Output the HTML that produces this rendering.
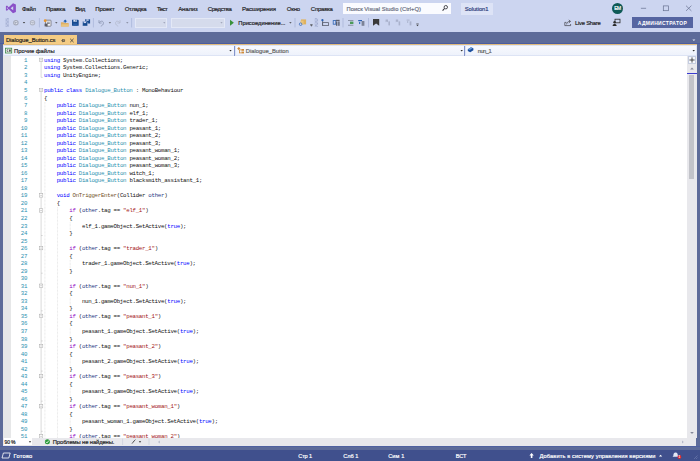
<!DOCTYPE html><html lang="ru"><head><meta charset="utf-8"><title>Dialogue_Button.cs - Solution1 - Microsoft Visual Studio</title><style>

html,body{margin:0;padding:0}
body{width:700px;height:461px;overflow:hidden;background:#ccd5f0;position:relative;font-family:"Liberation Sans", sans-serif}
.a{position:absolute}
.t{position:absolute;white-space:pre;line-height:1;-webkit-text-stroke:0.18px}
svg{position:absolute;overflow:visible}
.code{position:absolute;left:44.00px;top:56.85px;font-family:"Liberation Mono", monospace;font-size:5.750px;line-height:7.5300px;white-space:pre;color:#111;margin:0;letter-spacing:-0.2900px}
.ln{position:absolute;left:10px;width:17.2px;top:56.85px;font-family:"Liberation Mono", monospace;font-size:5.750px;line-height:7.5300px;white-space:pre;color:#2b91af;text-align:right;margin:0;letter-spacing:-0.2900px}
.k{color:#0000ff}.c{color:#8f08c4}.y{color:#2b91af}.s{color:#a31515}.m{color:#74531f}.p{color:#1f377f}

</style></head><body>
<div class="a" style="left:0;top:32px;width:700px;height:429px;background:#5d6b99"></div>
<div class="a" style="left:0;top:43px;width:700px;height:1.1px;background:#4a5da0"></div>
<div class="a" style="left:3.6px;top:34.6px;width:73.6px;height:10px;background:#f5cc84"></div>
<div class="a" style="left:3.4px;top:44.1px;width:693.2px;height:1.5px;background:linear-gradient(#ddb36e,#efd6a8)"></div>
<div class="a" style="left:3.4px;top:45.4px;width:693.2px;height:10.4px;background:#dde4f5"></div>
<div class="a" style="left:3.6px;top:45.8px;width:230px;height:9.4px;background:linear-gradient(#f7f9fe,#eef2fb)"></div>
<div class="a" style="left:236px;top:45.8px;width:228px;height:9.4px;background:linear-gradient(#f7f9fe,#eef2fb)"></div>
<div class="a" style="left:466px;top:45.8px;width:230.4px;height:9.4px;background:linear-gradient(#f7f9fe,#eef2fb)"></div>
<div class="a" style="left:233.8px;top:45.6px;width:1.3px;height:10px;background:#8495cb"></div>
<div class="a" style="left:464.2px;top:45.6px;width:1.3px;height:10px;background:#8495cb"></div>
<div class="a" style="left:3.2px;top:55.8px;width:693.3px;height:382px;background:#ffffff"></div>
<div class="a" style="left:3.2px;top:55.8px;width:7.4px;height:382px;background:#e6e7e8"></div>
<div class="a" style="left:687.4px;top:55.8px;width:9.2px;height:382px;background:#e8e8ec"></div>
<div class="a" style="left:689.2px;top:74.8px;width:4.8px;height:104px;background:#c2c3c9"></div>
<div class="a" style="left:687.4px;top:72.6px;width:9.2px;height:1px;background:#3a3ad0"></div>
<div class="a" style="left:687.6px;top:56px;width:8.8px;height:8px;background:#f5f7fc;border:0.5px solid #c5cde0;box-sizing:border-box"></div>
<div class="a" style="left:3.2px;top:437.8px;width:693.3px;height:7.8px;background:#e8e8ec"></div>
<div class="a" style="left:3.6px;top:438.2px;width:28.6px;height:7.2px;background:#ffffff"></div>
<div class="a" style="left:0;top:445.7px;width:700px;height:0.8px;background:#4f61a0"></div>
<div class="a" style="left:0;top:449.8px;width:700px;height:11.2px;background:#40508d"></div>
<div class="a" style="left:343px;top:3px;width:108.2px;height:10.8px;background:#fafbff"></div>
<div class="a" style="left:460.8px;top:2.6px;width:32.2px;height:12px;background:#dde3f6"></div>
<div class="a" style="left:612px;top:2.5px;width:11px;height:11px;border-radius:50%;background:#0e5a56"></div>
<div class="a" style="left:631.8px;top:17px;width:61.2px;height:11px;background:#5565a1"></div>
<div class="a" style="left:135.2px;top:17.5px;width:32.2px;height:10px;background:#d5dbec;border:0.5px solid #e3e8f6;box-sizing:border-box"></div>
<div class="a" style="left:170.6px;top:17.5px;width:54px;height:10px;background:#d5dbec;border:0.5px solid #e3e8f6;box-sizing:border-box"></div>
<svg class="ic" width="700" height="461" viewBox="0 0 700 461" style="left:0;top:0">
<!-- VS logo -->
<path fill="#8a50c8" fill-rule="evenodd" d="M13 3.2 L15.9 4.4 V12 L13 13.2 L8.7 9.1 L7 10.8 L5.9 10.2 V6.2 L7 5.6 L8.7 7.3 Z M13.2 6.2 V10.2 L10.6 8.2 Z M6.9 7.1 L8 8.2 L6.9 9.3 Z"/>
<!-- toolbar grips -->
<defs><pattern id="gp" width="1.4" height="1.4" patternUnits="userSpaceOnUse"><rect width="0.7" height="0.7" fill="#7482b0"/><rect x="0.7" y="0.7" width="0.7" height="0.7" fill="#7482b0"/></pattern></defs>
<rect x="5.5" y="18" width="3.4" height="9" fill="url(#gp)" opacity="0.55"/>
<rect x="314.7" y="18" width="3.4" height="9" fill="url(#gp)" opacity="0.55"/>
<!-- back / forward -->
<g fill="#dde1ee" stroke="#a4a9b9" stroke-width="1.1">
<circle cx="15.9" cy="22.7" r="2.2"/><circle cx="32.5" cy="22.7" r="2.2" stroke="#b0b5c4"/>
</g>
<path d="M14.2 22.7 L15.9 21.4 V22.3 H17.4 V23.1 H15.9 V24 Z" fill="#a4a9b9"/>
<path d="M34.2 22.7 L32.5 21.4 V22.3 H31 V23.1 H32.5 V24 Z" fill="#b0b5c4"/>
<path d="M22.8 22 H25.2 L24 23.4 Z" fill="#3b3b3b"/>
<!-- separators -->
<g stroke="#9dabd2" stroke-width="0.6">
<line x1="39.4" y1="18" x2="39.4" y2="27.4"/><line x1="93.4" y1="18" x2="93.4" y2="27.4"/>
<line x1="131.6" y1="18" x2="131.6" y2="27.4"/><line x1="295" y1="18" x2="295" y2="27.4"/>
<line x1="343" y1="18" x2="343" y2="27.4"/><line x1="368.5" y1="18" x2="368.5" y2="27.4"/>
</g>
<!-- new project -->
<g>
<rect x="45.6" y="20.2" width="5.4" height="6" rx="0.6" fill="#f1f2f6" stroke="#5e5e66" stroke-width="0.7"/>
<rect x="47" y="21.8" width="2.8" height="0.7" fill="#5e5e66"/><rect x="47" y="23.3" width="2.8" height="0.7" fill="#5e5e66"/><rect x="44.6" y="23.6" width="3" height="2.8" fill="#5e5e66"/>
<circle cx="45.2" cy="20.7" r="1.4" fill="#e8962e"/>
</g>
<path d="M55.1 22.2 H57.5 L56.3 23.6 Z" fill="#3b3b3b"/>
<!-- open folder -->
<path d="M60.9 22.2 H63.6 L64.4 23 H68.7 V26.5 H60.9 Z" fill="#dcb067"/>
<path d="M61.6 24.2 H68.7 V26.5 H60.9 Z" fill="#e9c47e"/>
<path d="M63.2 21.6 L65.2 19.4 L67.2 21.6 H66 V22.6 H64.4 V21.6 Z" fill="#1f5fae"/>
<!-- save -->
<path d="M72 19.7 H78 L78.7 20.4 V25.8 H72 Z" fill="#164a8e"/>
<rect x="73.4" y="19.7" width="3.6" height="2" fill="#dfe5f5"/><rect x="75.5" y="19.9" width="0.9" height="1.4" fill="#164a8e"/><rect x="73.2" y="23.4" width="4.2" height="2.4" fill="#2a5ea6"/>
<!-- save all -->
<path d="M85.2 19.3 H89.6 L90.1 19.8 V23.6 H85.2 Z" fill="#164a8e"/>
<rect x="86.3" y="19.3" width="2.4" height="1.5" fill="#ccd5f0"/>
<path d="M82.6 21.6 H87 L87.6 22.2 V26 H82.6 Z" fill="#164a8e" stroke="#ccd5f0" stroke-width="0.4"/>
<rect x="83.7" y="21.7" width="2.4" height="1.4" fill="#ccd5f0"/>
<!-- undo / redo -->
<path d="M99 20.2 V23 H101.6 M99.2 22.8 C100.6 20.4 103.6 20.8 103.4 23.2 C103.3 24.6 102.2 25.6 100.8 26.2" fill="none" stroke="#8d97b3" stroke-width="0.9"/>
<path d="M108.7 22.2 H111.1 L109.9 23.6 Z" fill="#5a5a5a"/>
<path d="M120 20.2 V23 H117.4 M119.8 22.8 C118.4 20.4 115.4 20.8 115.6 23.2 C115.7 24.6 116.8 25.6 118.2 26.2" fill="none" stroke="#b4bbcf" stroke-width="0.9"/>
<path d="M126.1 22.2 H128.5 L127.3 23.6 Z" fill="#7a7f90"/>
<!-- combo arrows -->
<path d="M163.2 22.2 H165.4 L164.3 23.5 Z" fill="#9298ad"/>
<path d="M220.4 22.2 H222.6 L221.5 23.5 Z" fill="#9298ad"/>
<!-- play -->
<path d="M230 19.7 L233.9 22.7 L230 25.7 Z" fill="#38913a"/>
<path d="M289.2 22.2 H291.6 L290.4 23.6 Z" fill="#3b3b3b"/>
<!-- find in files icon -->
<path d="M301 19.4 H306.1 V24.4 H301 Z" fill="#dfb25e"/>
<path d="M300.4 20.6 H303.6 V24.4 H300.4 Z" fill="#e9c47e"/>
<circle cx="300.6" cy="24.2" r="1.3" fill="#ccd5f0" stroke="#2a62b3" stroke-width="0.7"/>
<!-- overflow -->
<rect x="310.2" y="24" width="2.4" height="0.6" fill="#3b3b3b"/><path d="M310.2 25.2 H312.6 L311.4 26.6 Z" fill="#3b3b3b"/>
<rect x="416.3" y="23.6" width="2.4" height="0.6" fill="#3b3b3b"/><path d="M416.3 24.8 H418.7 L417.5 26.2 Z" fill="#3b3b3b"/>
<!-- icons 321.. -->
<g>
<rect x="322.6" y="22.6" width="5.8" height="3" fill="none" stroke="#5b6070" stroke-width="0.8"/>
<rect x="322.2" y="19.8" width="0.9" height="5.8" fill="#5b6070"/>
<circle cx="322.4" cy="20.2" r="1.1" fill="#2a62b3"/>
<rect x="333.2" y="20.6" width="2.6" height="3.6" fill="none" stroke="#2a62b3" stroke-width="0.8"/>
<rect x="335.8" y="19.8" width="3.8" height="1.2" fill="#5b6070"/>
<rect x="336" y="21.4" width="1.4" height="4.4" fill="#5b6070"/><rect x="338.2" y="21.4" width="1.4" height="4.4" fill="#5b6070"/>
<rect x="348" y="20" width="5.4" height="0.8" fill="#7c8397"/><rect x="350" y="21.6" width="3.4" height="2.4" fill="#4c9a5a"/><rect x="348" y="24.8" width="5.4" height="0.8" fill="#7c8397"/>
<path d="M358.2 20 H362 V21.2 H358.2 Z" fill="#2a62b3"/><path d="M359 21.8 L360.8 23 L359 24.2 Z" fill="#2a62b3"/>
<rect x="361.6" y="21" width="2.8" height="4.8" fill="#7c8397"/>
</g>
<!-- bookmark -->
<path d="M373 19 H379.2 V25.8 L376.1 23.4 L373 25.8 Z" fill="#3a3a3a"/>
<g fill="#aab2cc">
<path d="M385.6 19.6 H388 V22.2 L386.8 21.4 L385.6 22.2 Z"/><rect x="388.4" y="21.4" width="1.6" height="4"/>
<path d="M395.8 19.6 H398.2 V22.2 L397 21.4 L395.8 22.2 Z"/><rect x="398.6" y="21.4" width="1.6" height="4"/>
<path d="M406.6 19.6 H409.6 V20.6 H406.6 Z"/><path d="M407 21 L408.8 22 L407 23 Z"/><rect x="409.6" y="21.4" width="1.8" height="4"/>
</g>
<!-- search magnifier -->
<circle cx="445.8" cy="7.2" r="1.7" fill="none" stroke="#2f2f35" stroke-width="0.85"/><line x1="444.5" y1="8.5" x2="442.6" y2="10.6" stroke="#2f2f35" stroke-width="1.1"/>
<!-- window buttons -->
<g stroke="#66708f" stroke-width="0.7" fill="none">
<line x1="640.9" y1="8.3" x2="646.1" y2="8.3"/>
<rect x="663.3" y="5.9" width="5.2" height="4.8"/>
<path d="M686 5.7 L691.4 10.9 M691.4 5.7 L686 10.9"/>
</g>
<!-- live share -->
<g fill="none" stroke="#3f3f46" stroke-width="0.7">
<path d="M566.4 22.4 H564.8 V25.6 H570.6 V24"/>
<path d="M566.6 24.4 C566.8 22.4 568 21.4 570 21.4 M568.8 19.9 L570.6 21.4 L568.8 22.9"/>
</g>
<!-- feedback -->
<g>
<rect x="615" y="19.2" width="5" height="3.6" fill="#ccd5f0" stroke="#2b2b2b" stroke-width="0.8"/>
<circle cx="614.6" cy="22.2" r="1.2" fill="#2b2b2b"/><path d="M612.6 25.9 C612.6 23.4 616.6 23.4 616.6 25.9 Z" fill="#2b2b2b"/>
</g>
<!-- tab pin + close -->
<g stroke="#3b3b3b" stroke-width="0.6" fill="none">
<path d="M61.2 40.6 H62.6 M62.6 39 V42.2 M62.6 39.6 H64.6 V41.4 H62.6 M64.6 41 H62.8"/>
<path d="M70.2 38.8 L73.6 42.2 M73.6 38.8 L70.2 42.2" stroke-width="0.8"/>
</g>
<!-- tab row dropdown -->
<path d="M692.4 39.4 H695.4 L693.9 41 Z" fill="#e6ebf8"/>
<!-- nav icons -->
<rect x="5.5" y="48.2" width="6.2" height="4.8" fill="#f3f8f3" stroke="#3f8a4a" stroke-width="0.8"/>
<path d="M8.4 49.7 H7 V51.5 H8.4 M9 50.2 H10.8 M9 51 H10.8 M9.5 49.5 V51.7 M10.3 49.5 V51.7" stroke="#333" stroke-width="0.55" fill="none"/>
<g fill="#d08a38">
<path d="M237.2 48.6 L238.8 47 L240.4 48.6 L238.8 50.2 Z"/>
<rect x="241.4" y="49" width="2.6" height="1.8"/><rect x="241.4" y="51.6" width="2.6" height="1.8"/>
<path d="M239 50 H239.8 V52.6 H241.4 V53.2 H239 Z M239.6 49.6 H241.4 V50.3 H239.6Z"/>
</g>
<g>
<path d="M467.8 49.3 L471 47.2 L473.4 48.3 V50.3 L470.2 52.2 L467.8 51 Z" fill="#1b4f9f"/>
<path d="M468 49.3 L471 47.4 L472.6 48.2 L469.8 50 Z" fill="#6fa0dc"/>
</g>
<!-- nav dropdown arrows -->
<g fill="#2b2b2b">
<path d="M229.3 50 H231.7 L230.5 51.4 Z"/><path d="M460.5 50 H462.9 L461.7 51.4 Z"/><path d="M692.5 50 H694.9 L693.7 51.4 Z"/>
</g>
<!-- splitter + scroll arrows -->
<path d="M692 57.4 V62.6 M689.4 60 H694.6" stroke="#3b3b3b" stroke-width="0.9"/>
<path d="M690.2 69.4 L692 67.4 L693.8 69.4 Z" fill="#868999"/>
<path d="M690.2 432 H693.8 L692 434 Z" fill="#868999"/>
<path d="M682 440.4 L683.8 441.9 L682 443.4 Z" fill="#b4b8c8"/>
<path d="M159.8 440.4 L158 441.9 L159.8 443.4 Z" fill="#b4b8c8"/>
<!-- bottom bar -->
<path d="M28.8 441.3 H31.2 L30 442.7 Z" fill="#2b2b2b"/>
<circle cx="47.4" cy="441.8" r="2.5" fill="#2c9a3c"/>
<path d="M46 441.8 L47 442.9 L48.8 440.6" stroke="#fff" stroke-width="0.8" fill="none"/>
<line x1="122.6" y1="438.6" x2="122.6" y2="445" stroke="#c5c9d6" stroke-width="0.6"/>
<line x1="149" y1="438.6" x2="149" y2="445" stroke="#c5c9d6" stroke-width="0.6"/>
<path d="M132 443.6 L133.6 441.6 M133.2 442 L135.4 439.6" stroke="#3b3b3b" stroke-width="0.8" fill="none"/>
<path d="M138.8 441.3 H141.2 L140 442.7 Z" fill="#2b2b2b"/>
<!-- status bar -->
<path d="M3.4 453 H10.2 L8.8 458 H2 Z" fill="none" stroke="#ffffff" stroke-width="0.8"/>
<path d="M531.6 453 L529.4 455.4 H530.8 V458 H532.4 V455.4 H533.8 Z" fill="#ffffff"/>
<path d="M659 456.6 L660.6 454.8 L662.2 456.6 Z" fill="#ffffff"/>
<path d="M675.6 452.6 C677.4 452.6 677.8 454 677.8 455.4 L678.6 456.8 H672.6 L673.4 455.4 C673.4 454 673.8 452.6 675.6 452.6 Z" fill="#e4e8f5"/>
<circle cx="679.4" cy="457" r="1.9" fill="#e0262c"/>
<path d="M697.5 455.5 L694 459 M697.5 457.5 L696 459" stroke="#7f8bb8" stroke-width="0.5"/>
</svg>

<div class="t" id="t0" style="left:22.00px;top:6.00px;font-size:6.00px;color:#1e1e1e;font-weight:normal;font-family:'Liberation Sans', sans-serif;letter-spacing:-0.2552px;">Файл</div>
<div class="t" id="t1" style="left:46.00px;top:6.00px;font-size:6.00px;color:#1e1e1e;font-weight:normal;font-family:'Liberation Sans', sans-serif;letter-spacing:-0.2062px;">Правка</div>
<div class="t" id="t2" style="left:75.25px;top:6.00px;font-size:6.00px;color:#1e1e1e;font-weight:normal;font-family:'Liberation Sans', sans-serif;letter-spacing:-0.4297px;">Вид</div>
<div class="t" id="t3" style="left:95.25px;top:6.00px;font-size:6.00px;color:#1e1e1e;font-weight:normal;font-family:'Liberation Sans', sans-serif;letter-spacing:-0.0531px;">Проект</div>
<div class="t" id="t4" style="left:124.75px;top:6.00px;font-size:6.00px;color:#1e1e1e;font-weight:normal;font-family:'Liberation Sans', sans-serif;letter-spacing:-0.3281px;">Отладка</div>
<div class="t" id="t5" style="left:157.00px;top:6.00px;font-size:6.00px;color:#1e1e1e;font-weight:normal;font-family:'Liberation Sans', sans-serif;letter-spacing:-0.5573px;">Тест</div>
<div class="t" id="t6" style="left:178.25px;top:6.00px;font-size:6.00px;color:#1e1e1e;font-weight:normal;font-family:'Liberation Sans', sans-serif;letter-spacing:-0.1531px;">Анализ</div>
<div class="t" id="t7" style="left:207.75px;top:6.00px;font-size:6.00px;color:#1e1e1e;font-weight:normal;font-family:'Liberation Sans', sans-serif;letter-spacing:-0.3705px;">Средства</div>
<div class="t" id="t8" style="left:241.95px;top:6.00px;font-size:6.00px;color:#1e1e1e;font-weight:normal;font-family:'Liberation Sans', sans-serif;letter-spacing:-0.0896px;">Расширения</div>
<div class="t" id="t9" style="left:286.85px;top:6.00px;font-size:6.00px;color:#1e1e1e;font-weight:normal;font-family:'Liberation Sans', sans-serif;letter-spacing:-0.2510px;">Окно</div>
<div class="t" id="t10" style="left:310.85px;top:6.00px;font-size:6.00px;color:#1e1e1e;font-weight:normal;font-family:'Liberation Sans', sans-serif;letter-spacing:-0.2411px;">Справка</div>
<div class="t" id="t11" style="left:346.50px;top:7.00px;font-size:5.80px;color:#686d80;font-weight:normal;font-family:'Liberation Sans', sans-serif;letter-spacing:0.0260px;">Поиск Visual Studio (Ctrl+Q)</div>
<div class="t" id="t12" style="left:464.70px;top:7.00px;font-size:5.80px;color:#2b3a7a;font-weight:normal;font-family:'Liberation Sans', sans-serif;letter-spacing:-0.0484px;">Solution1</div>
<div class="t" id="t13" style="left:614.20px;top:7.00px;font-size:4.90px;color:#ffffff;font-weight:normal;font-family:'Liberation Sans', sans-serif;letter-spacing:-0.5438px;">EM</div>
<div class="t" id="t14" style="left:575.00px;top:21.00px;font-size:5.80px;color:#1e1e1e;font-weight:normal;font-family:'Liberation Sans', sans-serif;letter-spacing:-0.2132px;">Live Share</div>
<div class="t" id="t15" style="left:637.80px;top:21.00px;font-size:5.00px;color:#ffffff;font-weight:bold;font-family:'Liberation Sans', sans-serif;letter-spacing:0.3099px;-webkit-text-stroke:0;">АДМИНИСТРАТОР</div>
<div class="t" id="t16" style="left:238.30px;top:21.00px;font-size:5.80px;color:#1e1e1e;font-weight:normal;font-family:'Liberation Sans', sans-serif;letter-spacing:-0.0179px;">Присоединение...</div>
<div class="t" id="t17" style="left:5.90px;top:38.00px;font-size:5.80px;color:#1e1e1e;font-weight:normal;font-family:'Liberation Sans', sans-serif;letter-spacing:-0.0401px;">Dialogue_Button.cs</div>
<div class="t" id="t18" style="left:14.10px;top:49.00px;font-size:5.80px;color:#1e1e1e;font-weight:normal;font-family:'Liberation Sans', sans-serif;letter-spacing:0.0205px;">Прочие файлы</div>
<div class="t" id="t19" style="left:245.70px;top:49.00px;font-size:5.80px;color:#666666;font-weight:normal;font-family:'Liberation Sans', sans-serif;letter-spacing:0.0161px;">Dialogue_Button</div>
<div class="t" id="t20" style="left:477.70px;top:49.00px;font-size:5.80px;color:#666666;font-weight:normal;font-family:'Liberation Sans', sans-serif;letter-spacing:-0.5062px;">nun_1</div>
<div class="t" id="t21" style="left:4.60px;top:440.00px;font-size:5.10px;color:#1e1e1e;font-weight:normal;font-family:'Liberation Sans', sans-serif;letter-spacing:-0.2417px;">90 %</div>
<div class="t" id="t22" style="left:52.80px;top:440.00px;font-size:5.80px;color:#1e1e1e;font-weight:normal;font-family:'Liberation Sans', sans-serif;letter-spacing:-0.0910px;">Проблемы не найдены.</div>
<div class="t" id="t23" style="left:13.60px;top:454.00px;font-size:5.80px;color:#ffffff;font-weight:normal;font-family:'Liberation Sans', sans-serif;letter-spacing:0.1587px;">Готово</div>
<div class="t" id="t24" style="left:298.20px;top:454.00px;font-size:5.60px;color:#ffffff;font-weight:normal;font-family:'Liberation Sans', sans-serif;letter-spacing:-0.0977px;">Стр 1</div>
<div class="t" id="t25" style="left:343.20px;top:454.00px;font-size:5.60px;color:#ffffff;font-weight:normal;font-family:'Liberation Sans', sans-serif;letter-spacing:0.0031px;">Слб 1</div>
<div class="t" id="t26" style="left:388.20px;top:454.00px;font-size:5.60px;color:#ffffff;font-weight:normal;font-family:'Liberation Sans', sans-serif;letter-spacing:0.1031px;">Сим 1</div>
<div class="t" id="t27" style="left:455.70px;top:454.00px;font-size:5.60px;color:#ffffff;font-weight:normal;font-family:'Liberation Sans', sans-serif;letter-spacing:-0.0641px;">ВСТ</div>
<div class="t" id="t28" style="left:539.60px;top:454.00px;font-size:5.70px;color:#ffffff;font-weight:normal;font-family:'Liberation Sans', sans-serif;letter-spacing:0.0957px;">Добавить в систему управления версиями</div>
<div class="t" id="t29" style="left:678.60px;top:456.00px;font-size:3.20px;color:#ffffff;font-weight:bold;font-family:'Liberation Sans', sans-serif;letter-spacing:0.0000px;-webkit-text-stroke:0;">1</div>
<div class="a" style="left:3.2px;top:55.8px;width:684px;height:382px;overflow:hidden"><div class="a" style="left:-3.2px;top:-55.8px;width:700px;height:461px">
<svg width="700" height="461" viewBox="0 0 700 461" style="left:0;top:0"><line x1="41.10" y1="59.85" x2="41.10" y2="77.41" stroke="#b4b4b4" stroke-width="0.5"/><line x1="41.10" y1="77.41" x2="42.70" y2="77.41" stroke="#b4b4b4" stroke-width="0.5"/><line x1="41.10" y1="89.97" x2="41.10" y2="440.88" stroke="#b4b4b4" stroke-width="0.5"/><line x1="41.10" y1="235.54" x2="42.70" y2="235.54" stroke="#b4b4b4" stroke-width="0.5"/><line x1="41.10" y1="273.19" x2="42.70" y2="273.19" stroke="#b4b4b4" stroke-width="0.5"/><line x1="41.10" y1="310.84" x2="42.70" y2="310.84" stroke="#b4b4b4" stroke-width="0.5"/><line x1="41.10" y1="340.96" x2="42.70" y2="340.96" stroke="#b4b4b4" stroke-width="0.5"/><line x1="41.10" y1="371.08" x2="42.70" y2="371.08" stroke="#b4b4b4" stroke-width="0.5"/><line x1="41.10" y1="401.20" x2="42.70" y2="401.20" stroke="#b4b4b4" stroke-width="0.5"/><line x1="41.10" y1="431.32" x2="42.70" y2="431.32" stroke="#b4b4b4" stroke-width="0.5"/><rect x="39.40" y="58.15" width="3.4" height="3.4" fill="#fff" stroke="#a8a8a8" stroke-width="0.5"/><line x1="40.20" y1="59.85" x2="42.00" y2="59.85" stroke="#888" stroke-width="0.4"/><rect x="39.40" y="88.27" width="3.4" height="3.4" fill="#fff" stroke="#a8a8a8" stroke-width="0.5"/><line x1="40.20" y1="89.97" x2="42.00" y2="89.97" stroke="#888" stroke-width="0.4"/><rect x="39.40" y="193.69" width="3.4" height="3.4" fill="#fff" stroke="#a8a8a8" stroke-width="0.5"/><line x1="40.20" y1="195.39" x2="42.00" y2="195.39" stroke="#888" stroke-width="0.4"/><rect x="39.40" y="208.75" width="3.4" height="3.4" fill="#fff" stroke="#a8a8a8" stroke-width="0.5"/><line x1="40.20" y1="210.45" x2="42.00" y2="210.45" stroke="#888" stroke-width="0.4"/><rect x="39.40" y="246.40" width="3.4" height="3.4" fill="#fff" stroke="#a8a8a8" stroke-width="0.5"/><line x1="40.20" y1="248.10" x2="42.00" y2="248.10" stroke="#888" stroke-width="0.4"/><rect x="39.40" y="284.05" width="3.4" height="3.4" fill="#fff" stroke="#a8a8a8" stroke-width="0.5"/><line x1="40.20" y1="285.75" x2="42.00" y2="285.75" stroke="#888" stroke-width="0.4"/><rect x="39.40" y="314.17" width="3.4" height="3.4" fill="#fff" stroke="#a8a8a8" stroke-width="0.5"/><line x1="40.20" y1="315.87" x2="42.00" y2="315.87" stroke="#888" stroke-width="0.4"/><rect x="39.40" y="344.29" width="3.4" height="3.4" fill="#fff" stroke="#a8a8a8" stroke-width="0.5"/><line x1="40.20" y1="345.99" x2="42.00" y2="345.99" stroke="#888" stroke-width="0.4"/><rect x="39.40" y="374.41" width="3.4" height="3.4" fill="#fff" stroke="#a8a8a8" stroke-width="0.5"/><line x1="40.20" y1="376.11" x2="42.00" y2="376.11" stroke="#888" stroke-width="0.4"/><rect x="39.40" y="404.53" width="3.4" height="3.4" fill="#fff" stroke="#a8a8a8" stroke-width="0.5"/><line x1="40.20" y1="406.23" x2="42.00" y2="406.23" stroke="#888" stroke-width="0.4"/><rect x="39.40" y="434.65" width="3.4" height="3.4" fill="#fff" stroke="#a8a8a8" stroke-width="0.5"/><line x1="40.20" y1="436.35" x2="42.00" y2="436.35" stroke="#888" stroke-width="0.4"/><line x1="44.90" y1="102.03" x2="44.90" y2="440.88" stroke="#c8c8c8" stroke-width="0.5" stroke-dasharray="0.7 0.7"/><line x1="57.54" y1="207.45" x2="57.54" y2="440.88" stroke="#c8c8c8" stroke-width="0.5" stroke-dasharray="0.7 0.7"/><line x1="70.18" y1="222.51" x2="70.18" y2="230.04" stroke="#c8c8c8" stroke-width="0.5" stroke-dasharray="0.7 0.7"/><line x1="70.18" y1="260.16" x2="70.18" y2="267.69" stroke="#c8c8c8" stroke-width="0.5" stroke-dasharray="0.7 0.7"/><line x1="70.18" y1="297.81" x2="70.18" y2="305.34" stroke="#c8c8c8" stroke-width="0.5" stroke-dasharray="0.7 0.7"/><line x1="70.18" y1="327.93" x2="70.18" y2="335.46" stroke="#c8c8c8" stroke-width="0.5" stroke-dasharray="0.7 0.7"/><line x1="70.18" y1="358.05" x2="70.18" y2="365.58" stroke="#c8c8c8" stroke-width="0.5" stroke-dasharray="0.7 0.7"/><line x1="70.18" y1="388.17" x2="70.18" y2="395.70" stroke="#c8c8c8" stroke-width="0.5" stroke-dasharray="0.7 0.7"/><line x1="70.18" y1="418.29" x2="70.18" y2="425.82" stroke="#c8c8c8" stroke-width="0.5" stroke-dasharray="0.7 0.7"/></svg>
<pre class="ln">1
2
3
4
5
6
7
8
9
10
11
12
13
14
15
16
17
18
19
20
21
22
23
24
25
26
27
28
29
30
31
32
33
34
35
36
37
38
39
40
41
42
43
44
45
46
47
48
49
50
51</pre>
<pre class="code"><span class="k">using</span> System.Collections;
<span class="k">using</span> System.Collections.Generic;
<span class="k">using</span> UnityEngine;

<span class="k">public</span> <span class="k">class</span> <span class="y">Dialogue_Button</span> : MonoBehaviour
{
    <span class="k">public</span> <span class="y">Dialogue_Button</span> nun_1;
    <span class="k">public</span> <span class="y">Dialogue_Button</span> elf_1;
    <span class="k">public</span> <span class="y">Dialogue_Button</span> trader_1;
    <span class="k">public</span> <span class="y">Dialogue_Button</span> peasant_1;
    <span class="k">public</span> <span class="y">Dialogue_Button</span> peasant_2;
    <span class="k">public</span> <span class="y">Dialogue_Button</span> peasant_3;
    <span class="k">public</span> <span class="y">Dialogue_Button</span> peasant_woman_1;
    <span class="k">public</span> <span class="y">Dialogue_Button</span> peasant_woman_2;
    <span class="k">public</span> <span class="y">Dialogue_Button</span> peasant_woman_3;
    <span class="k">public</span> <span class="y">Dialogue_Button</span> witch_1;
    <span class="k">public</span> <span class="y">Dialogue_Button</span> blacksmith_assistant_1;

    <span class="k">void</span> <span class="m">OnTriggerEnter</span>(Collider <span class="p">other</span>)
    {
        <span class="c">if</span> (<span class="p">other</span>.tag == <span class="s">"elf_1"</span>)
        {
            elf_1.gameObject.SetActive(<span class="k">true</span>);
        }

        <span class="c">if</span> (<span class="p">other</span>.tag == <span class="s">"trader_1"</span>)
        {
            trader_1.gameObject.SetActive(<span class="k">true</span>);
        }

        <span class="c">if</span> (<span class="p">other</span>.tag == <span class="s">"nun_1"</span>)
        {
            nun_1.gameObject.SetActive(<span class="k">true</span>);
        }
        <span class="c">if</span> (<span class="p">other</span>.tag == <span class="s">"peasant_1"</span>)
        {
            peasant_1.gameObject.SetActive(<span class="k">true</span>);
        }
        <span class="c">if</span> (<span class="p">other</span>.tag == <span class="s">"peasant_2"</span>)
        {
            peasant_2.gameObject.SetActive(<span class="k">true</span>);
        }
        <span class="c">if</span> (<span class="p">other</span>.tag == <span class="s">"peasant_3"</span>)
        {
            peasant_3.gameObject.SetActive(<span class="k">true</span>);
        }
        <span class="c">if</span> (<span class="p">other</span>.tag == <span class="s">"peasant_woman_1"</span>)
        {
            peasant_woman_1.gameObject.SetActive(<span class="k">true</span>);
        }
        <span class="c">if</span> (<span class="p">other</span>.tag == <span class="s">"peasant_woman_2"</span>)</pre>
</div></div>
</body></html>
